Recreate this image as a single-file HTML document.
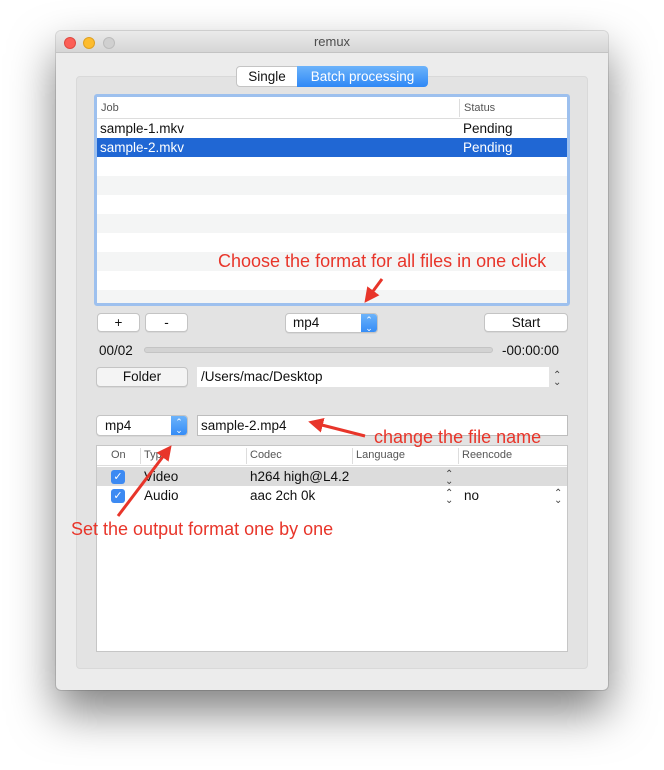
<!DOCTYPE html>
<html><head><meta charset="utf-8">
<style>
*{margin:0;padding:0;box-sizing:border-box}
body{width:664px;height:770px;background:#fff;position:relative;overflow:hidden;font-family:"Liberation Sans",sans-serif;font-size:13.5px;color:#111}
.a{position:absolute}
.win{left:56px;top:31px;width:552px;height:659px;background:#ececec;border-radius:5px;box-shadow:0 22px 45px rgba(0,0,0,.5),0 0 0 1px rgba(0,0,0,.12)}
.title{left:0;top:0;width:552px;height:22px;background:linear-gradient(#ebebeb,#d6d6d6);border-bottom:1px solid #c3c3c3;border-radius:5px 5px 0 0;text-align:center;line-height:22px;color:#4d4d4d;font-size:13px}
.dot{width:12px;height:12px;border-radius:50%;top:6px}
.box{left:20px;top:45px;width:512px;height:593px;background:#e3e3e3;border:1px solid #d9d9d9;border-radius:4px}
.btn{background:#fff;border:1px solid #c4c4c4;border-radius:4px;text-align:center;line-height:17px;box-shadow:0 1px 0 rgba(0,0,0,.05)}
.stripe{background:#f4f5f5;height:19px;left:0;width:470px}
.hdr{font-size:11px;color:#555}
.red{color:#e8352a;font-size:18px}
.cb{width:14px;height:14px;border-radius:3px;background:#3d8af2;color:#fff;font-size:11px;line-height:14px;text-align:center}
.step{font-size:10px;color:#444;line-height:7px;text-align:center}
</style></head><body>
<div class="a win">
 <div class="a title">remux</div>
 <div class="a dot" style="left:8px;background:#fc5f57;border:1px solid #de4a42"></div>
 <div class="a dot" style="left:27px;background:#fdbc2e;border:1px solid #dea123"></div>
 <div class="a dot" style="left:47px;background:#d0d0d0;border:1px solid #bcbcbc"></div>
 <div class="a box"></div>
</div>
<div class="a" style="left:236px;top:66px;width:62px;height:21px;background:#fff;border:1px solid #c4c4c4;border-radius:4px 0 0 4px;text-align:center;line-height:19px">Single</div>
<div class="a" style="left:297px;top:66px;width:131px;height:21px;background:linear-gradient(#6cb3fa,#2f88f6);border-radius:0 4px 4px 0;color:#fff;text-align:center;line-height:21px">Batch processing</div>
<div class="a" style="left:94px;top:94px;width:476px;height:212px;border:3px solid #9dc0ee;border-radius:3px;background:#fff;overflow:hidden">
 <div class="a hdr" style="left:0;top:0;width:470px;height:22px;border-bottom:1px solid #ddd;line-height:22px;padding-left:4px">Job</div>
 <div class="a" style="left:362px;top:2px;width:1px;height:18px;background:#ddd"></div>
 <div class="a hdr" style="left:367px;top:0;line-height:22px">Status</div>
 <div class="a" style="left:0;top:22px;width:470px;height:19px;line-height:19px;padding-left:3px">sample-1.mkv</div>
 <div class="a" style="left:366px;top:22px;line-height:19px">Pending</div>
 <div class="a" style="left:0;top:41px;width:470px;height:19px;line-height:19px;padding-left:3px;background:#2067d4;color:#fff">sample-2.mkv<span class="a" style="left:366px;top:0">Pending</span></div>
 <div class="a stripe" style="top:79px"></div>
 <div class="a stripe" style="top:117px"></div>
 <div class="a stripe" style="top:155px"></div>
 <div class="a stripe" style="top:193px"></div>
</div>
<div class="a red" style="left:218px;top:251px">Choose the format for all files in one click</div>
<div class="a btn" style="left:97px;top:313px;width:43px;height:19px">+</div>
<div class="a btn" style="left:145px;top:313px;width:43px;height:19px">-</div>
<div class="a btn" style="left:285px;top:313px;width:93px;height:20px;text-align:left;padding-left:7px;overflow:hidden">mp4<div class="a" style="right:0;top:0;width:16px;height:20px;background:linear-gradient(#6cb3fa,#2f88f6);color:#fff;font-size:9px;line-height:8px;padding-top:2px;text-align:center">⌃<br>⌄</div></div>
<div class="a btn" style="left:484px;top:313px;width:84px;height:19px">Start</div>
<div class="a" style="left:99px;top:343px">00/02</div>
<div class="a" style="left:144px;top:347px;width:349px;height:6px;border-radius:3px;background:#d3d3d3;border:1px solid #c4c4c4"></div>
<div class="a" style="left:502px;top:343px">-00:00:00</div>
<div class="a btn" style="left:96px;top:367px;width:92px;height:20px;background:#f4f4f4">Folder</div>
<div class="a" style="left:197px;top:367px;width:352px;height:20px;background:#fff;line-height:20px;padding-left:4px">/Users/mac/Desktop</div>
<div class="a step" style="left:553px;top:372px">⌃<br>⌄</div>
<div class="a btn" style="left:96px;top:415px;width:92px;height:21px;text-align:left;padding-left:8px;line-height:19px;overflow:hidden">mp4<div class="a" style="right:0;top:0;width:16px;height:21px;background:linear-gradient(#6cb3fa,#2f88f6);color:#fff;font-size:9px;line-height:8px;padding-top:2px;text-align:center">⌃<br>⌄</div></div>
<div class="a" style="left:197px;top:415px;width:371px;height:21px;background:#fff;border:1px solid #bdbdbd;line-height:19px;padding-left:3px">sample-2.mp4</div>
<div class="a" style="left:96px;top:445px;width:472px;height:207px;background:#fff;border:1px solid #c6c6c6">
 <div class="a hdr" style="left:0;top:0;width:470px;height:20px;border-bottom:1px solid #ddd;line-height:20px"></div>
 <div class="a hdr" style="left:14px;top:3px">On</div>
 <div class="a" style="left:43px;top:2px;width:1px;height:16px;background:#ddd"></div>
 <div class="a hdr" style="left:47px;top:3px">Type</div>
 <div class="a" style="left:149px;top:2px;width:1px;height:16px;background:#ddd"></div>
 <div class="a hdr" style="left:153px;top:3px">Codec</div>
 <div class="a" style="left:255px;top:2px;width:1px;height:16px;background:#ddd"></div>
 <div class="a hdr" style="left:259px;top:3px">Language</div>
 <div class="a" style="left:361px;top:2px;width:1px;height:16px;background:#ddd"></div>
 <div class="a hdr" style="left:365px;top:3px">Reencode</div>
 <div class="a" style="left:0;top:21px;width:470px;height:19px;background:#dcdcdc"></div>
 <div class="a cb" style="left:14px;top:24px">✓</div>
 <div class="a" style="left:47px;top:23px">Video</div>
 <div class="a" style="left:153px;top:23px">h264 high@L4.2</div>
 <div class="a step" style="left:348px;top:25px">⌃<br>⌄</div>
 <div class="a cb" style="left:14px;top:43px">✓</div>
 <div class="a" style="left:47px;top:42px">Audio</div>
 <div class="a" style="left:153px;top:42px">aac 2ch 0k</div>
 <div class="a step" style="left:348px;top:44px">⌃<br>⌄</div>
 <div class="a" style="left:367px;top:42px">no</div>
 <div class="a step" style="left:457px;top:44px">⌃<br>⌄</div>
</div>
<div class="a red" style="left:374px;top:427px">change the file name</div>
<div class="a red" style="left:71px;top:519px">Set the output format one by one</div>
<svg class="a" style="left:0;top:0" width="664" height="770">
 <defs><marker id="h" markerWidth="5" markerHeight="5" refX="3" refY="2.5" orient="auto"><path d="M0,0L5,2.5L0,5z" fill="#e8352a"/></marker></defs>
 <g stroke="#e8352a" stroke-width="3" fill="none" marker-end="url(#h)">
  <line x1="382" y1="279" x2="368" y2="298"/>
  <line x1="365" y1="436" x2="314" y2="423"/>
  <line x1="118" y1="516" x2="168" y2="450"/>
 </g>
</svg>
</body></html>
